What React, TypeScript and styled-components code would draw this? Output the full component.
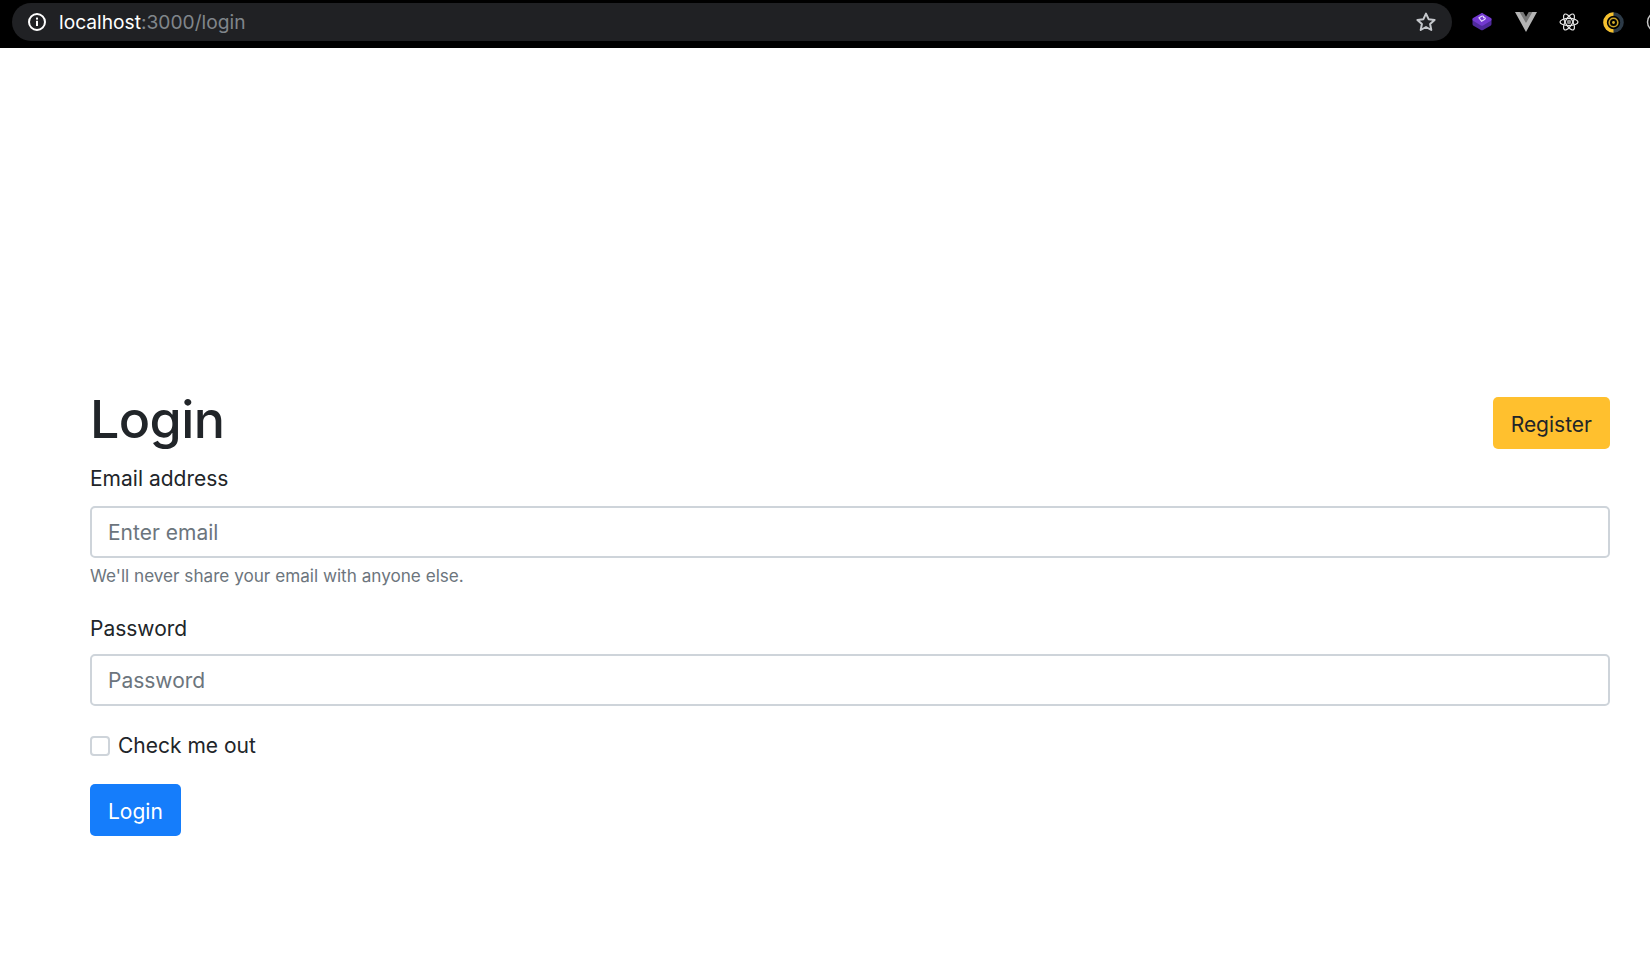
import styled, { createGlobalStyle } from 'styled-components';

const GlobalStyle = createGlobalStyle`
  html, body {
    margin: 0;
    background: #fff;
  }
  body {
    font-family: Inter, "Liberation Sans", sans-serif;
    color: #212529;
    overflow: hidden;
  }
`;

const Toolbar = styled.div`
  display: flex;
  align-items: center;
  height: 48px;
  background: #000;
  padding-left: 12px;
  overflow: hidden;
`;

const AddressBar = styled.div`
  display: flex;
  align-items: center;
  flex: none;
  width: 1440px;
  height: 38px;
  margin-top: -4px;
  padding: 0 15px 0 15px;
  box-sizing: border-box;
  border-radius: 19px;
  background: #202124;
`;

const Url = styled.div`
  flex: 1;
  margin-left: 12px;
  font-size: 19.2px;
  color: #fff;
`;

const UrlRest = styled.span`
  color: #80868b;
`;

const Extensions = styled.div`
  display: flex;
  align-items: center;
  gap: 19.700px;
  margin: -4px 0 0 18px;
`;

const ExtensionSlot = styled.div`
  display: flex;
  align-items: center;
  justify-content: center;
  flex: none;
  width: 24px;
  height: 24px;
`;

const Page = styled.main`
  padding: 340px 40px 0 90px;
`;

const Header = styled.div`
  display: flex;
  justify-content: space-between;
  align-items: flex-start;
  margin-bottom: 10px;
`;

const Title = styled.h1`
  margin: 0;
  font-size: 52px;
  font-weight: 500;
  line-height: 64px;
  letter-spacing: -0.6px;
`;

const Button = styled.button<{ $variant: 'primary' | 'warning' }>`
  height: 52px;
  padding: 2px 18px 0;
  border: 0;
  border-radius: 5px;
  font-family: inherit;
  font-size: 21px;
  background: ${(p) => (p.$variant === 'primary' ? '#157dfb' : '#ffc02e')};
  color: ${(p) => (p.$variant === 'primary' ? '#fff' : '#212529')};
`;

const RegisterButton = styled(Button)`
  margin-top: 9px;
`;

const Field = styled.div<{ $gap: number }>`
  margin-bottom: ${(p) => p.$gap}px;
`;

const Label = styled.label<{ $gap: number }>`
  display: block;
  margin-bottom: ${(p) => p.$gap}px;
  font-size: 21px;
  line-height: 33px;
`;

const Input = styled.input`
  display: block;
  width: 100%;
  height: 52px;
  box-sizing: border-box;
  padding: 0 16px;
  border: 2px solid #ced4da;
  border-radius: 5px;
  font-family: inherit;
  font-size: 21px;
  background: #fff;
  &::placeholder {
    color: #6c757d;
    opacity: 1;
  }
`;

const Hint = styled.small`
  display: block;
  margin-top: 5px;
  font-size: 17.15px;
  line-height: 26px;
  color: #6c757d;
`;

const CheckRow = styled.label`
  display: flex;
  align-items: center;
  margin-bottom: 22px;
  font-size: 21px;
  line-height: 33px;
`;

const CheckBox = styled.input`
  appearance: none;
  width: 20px;
  height: 20px;
  margin: 0 8px 0 0;
  border: 2px solid #ced4da;
  border-radius: 4px;
  background: #fff;
`;

const InfoIcon = () => (
  <svg width="20" height="20" viewBox="0 0 20 20" fill="none">
    <circle cx="10" cy="10" r="8" stroke="#fff" strokeWidth="2" />
    <rect x="9" y="8.800" width="2" height="5.200" fill="#fff" />
    <rect x="9" y="5.600" width="2" height="2" fill="#fff" />
  </svg>
);

const StarIcon = () => (
  <svg width="22" height="22" viewBox="0 0 22 22" fill="none">
    <path
      d="M11 2.600l2.600 5.600 6 .7-4.500 4.100 1.200 6L11 16l-5.300 3 1.200-6-4.500-4.100 6-.7z"
      stroke="#c4c7cb"
      strokeWidth="2"
      strokeLinejoin="round"
    />
  </svg>
);

const BootstrapIcon = () => (
  <svg width="22" height="22" viewBox="0 0 22 22">
    <path d="M1.500 8.500v4.500c0 .8.300 1.300 1 1.700l7.400 4.300c.7.400 1.500.4 2.200 0l7.400-4.300c.7-.4 1-.9 1-1.700V8.500z" fill="#4f2a9c" />
    <path d="M9.900 2.400c.7-.4 1.500-.4 2.200 0l7.800 4.700c1 .6 1 2.100 0 2.700l-7.800 4.700c-.7.400-1.500.4-2.200 0L2.100 9.800c-1-.6-1-2.100 0-2.700z" fill="#7339d0" />
    <path d="M8 6.800l2.600-1.500c.8-.4 1.700-.3 2 .2.300.4.100.9-.5 1.300.9-.3 1.800-.2 2.100.3.300.5 0 1.100-.7 1.500l-2.900 1.700z" fill="none" stroke="#e6dcff" strokeWidth="1.100" />
  </svg>
);

const VueIcon = () => (
  <svg width="22" height="20" viewBox="0 0 22 20">
    <path d="M0 0h5.500L11 9.500 16.500 0H22L11 20z" fill="#b4b4b4" />
    <path d="M4.600 0h3.700L11 4.700 13.700 0h3.700L11 11z" fill="#777" />
  </svg>
);

const ReactIcon = () => (
  <svg width="20" height="20" viewBox="0 0 20 20" fill="none" stroke="#e8e8e8" strokeWidth="1.200">
    <ellipse cx="10" cy="10" rx="9" ry="3.600" />
    <ellipse cx="10" cy="10" rx="9" ry="3.600" transform="rotate(60 10 10)" />
    <ellipse cx="10" cy="10" rx="9" ry="3.600" transform="rotate(120 10 10)" />
    <circle cx="10" cy="10" r="2.200" fill="#8a8a8a" stroke="none" />
  </svg>
);

const RingIcon = () => (
  <svg width="21" height="21" viewBox="0 0 21 21" fill="none">
    <circle cx="10.500" cy="10.500" r="8.500" stroke="#2c3a47" strokeWidth="3.600" />
    <path d="M10.500 2a8.500 8.500 0 0 0 0 17" stroke="#f7c12d" strokeWidth="3.600" />
    <circle cx="10.500" cy="10.500" r="4.300" stroke="#c9a227" strokeWidth="1.600" />
    <circle cx="10.500" cy="10.500" r="1.400" fill="#d8b02a" />
  </svg>
);

const CutOffIcon = () => (
  <svg width="22" height="22" viewBox="0 0 22 22" fill="none">
    <circle cx="11" cy="11" r="9.500" stroke="#c8c8c8" strokeWidth="1.500" />
  </svg>
);

export default function App() {
  return (
    <>
      <GlobalStyle />
      <Toolbar>
        <AddressBar>
          <InfoIcon />
          <Url>
            localhost<UrlRest>:3000/login</UrlRest>
          </Url>
          <StarIcon />
        </AddressBar>
        <Extensions>
          <ExtensionSlot><BootstrapIcon /></ExtensionSlot>
          <ExtensionSlot><VueIcon /></ExtensionSlot>
          <ExtensionSlot><ReactIcon /></ExtensionSlot>
          <ExtensionSlot><RingIcon /></ExtensionSlot>
          <ExtensionSlot><CutOffIcon /></ExtensionSlot>
        </Extensions>
      </Toolbar>
      <Page>
        <Header>
          <Title>Login</Title>
          <RegisterButton $variant="warning">Register</RegisterButton>
        </Header>
        <form>
          <Field $gap={23}>
            <Label $gap={11}>Email address</Label>
            <Input type="email" placeholder="Enter email" />
            <Hint>We'll never share your email with anyone else.</Hint>
          </Field>
          <Field $gap={23}>
            <Label $gap={9}>Password</Label>
            <Input type="password" placeholder="Password" />
          </Field>
          <CheckRow>
            <CheckBox type="checkbox" />
            Check me out
          </CheckRow>
          <Button $variant="primary" type="button">
            Login
          </Button>
        </form>
      </Page>
    </>
  );
}
